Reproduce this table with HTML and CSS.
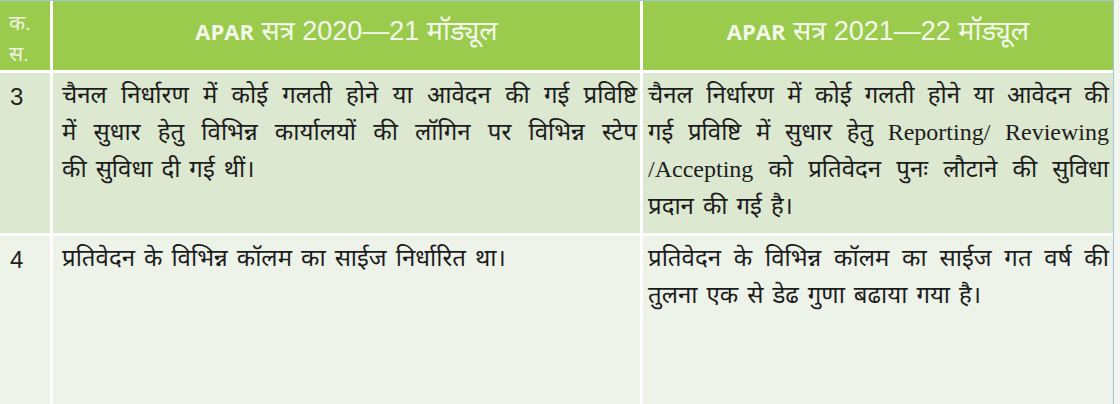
FILE: index.html
```html
<!DOCTYPE html>
<html lang="hi">
<head>
<meta charset="utf-8">
<link rel="stylesheet" href="styles.css">
</head>
<body>
<div class="table">
  <div class="cell head num">क.<br>स.</div>
  <div class="cell head title"><b>APAR</b> सत्र 2020—21 मॉड्यूल</div>
  <div class="cell head title"><b>APAR</b> सत्र 2021—22 मॉड्यूल</div>

  <div class="cell r1 num">3</div>
  <div class="cell r1 text c2">
    <span class="line">चैनल निर्धारण में कोई गलती होने या आवेदन की गई प्रविष्टि</span>
    <span class="line">में सुधार हेतु विभिन्न कार्यालयों की लॉगिन पर विभिन्न स्टेप</span>
    <span class="line last">की सुविधा दी गई थीं।</span>
  </div>
  <div class="cell r1 text c3">
    <span class="line">चैनल निर्धारण में कोई गलती होने या आवेदन की</span>
    <span class="line">गई प्रविष्टि में सुधार हेतु Reporting/ Reviewing</span>
    <span class="line">/Accepting को प्रतिवेदन पुनः लौटाने की सुविधा</span>
    <span class="line last">प्रदान की गई है।</span>
  </div>

  <div class="cell r2 num">4</div>
  <div class="cell r2 text c2">
    <span class="line last">प्रतिवेदन के विभिन्न कॉलम का साईज निर्धारित था।</span>
  </div>
  <div class="cell r2 text c3">
    <span class="line">प्रतिवेदन के विभिन्न कॉलम का साईज गत वर्ष की</span>
    <span class="line last">तुलना एक से डेढ गुणा बढाया गया है।</span>
  </div>
</div>
</body>
</html>
```

FILE: styles.css
```css
html, body {
  margin: 0;
  padding: 0;
  background: #f4f7f1;
}
.table {
  width: 1113px;
  height: 403px;
  display: grid;
  grid-template-columns: 50px 587px 470px;
  grid-template-rows: 69px 160px 1fr;
  gap: 3px;
  background: #ffffff;
  border-top: 1px solid #9fc6dc;
  border-right: 1px solid #9fc6dc;
  overflow: hidden;
}
.cell {
  box-sizing: border-box;
}
.head {
  background: #9acb4d;
  color: #f3f8ea;
  font-family: "Liberation Sans", "Noto Sans Devanagari", sans-serif;
}
.head.num {
  font-size: 21px;
  line-height: 31px;
  padding: 6px 0 0 9px;
  color: #eef5e2;
}
.head.title {
  font-size: 27px;
  text-align: center;
  padding-top: 15px;
}
.head.title b {
  font-family: "Open Sans", "Noto Sans", sans-serif;
  font-weight: 700;
  font-size: 22px;
}
.r1 { background: #dde8d1; }
.r2 { background: #eef3ea; }
.num {
  font-family: "Liberation Sans", Arial, sans-serif;
  font-size: 24px;
  color: #222;
  padding: 10px 0 0 10px;
}
.text {
  font-family: "Liberation Serif", "Noto Sans Devanagari", "Lohit Devanagari", serif;
  font-size: 24px;
  word-spacing: 3px;
  line-height: 37px;
  color: #1c1c1c;
  padding-top: 4px;
}
.line {
  display: block;
  text-align: justify;
  text-align-last: justify;
  white-space: nowrap;
}
.line.last {
  text-align-last: left;
}
.c2 { padding-left: 9px; padding-right: 3px; }
.c3 { padding-left: 5px; padding-right: 4px; }
```
